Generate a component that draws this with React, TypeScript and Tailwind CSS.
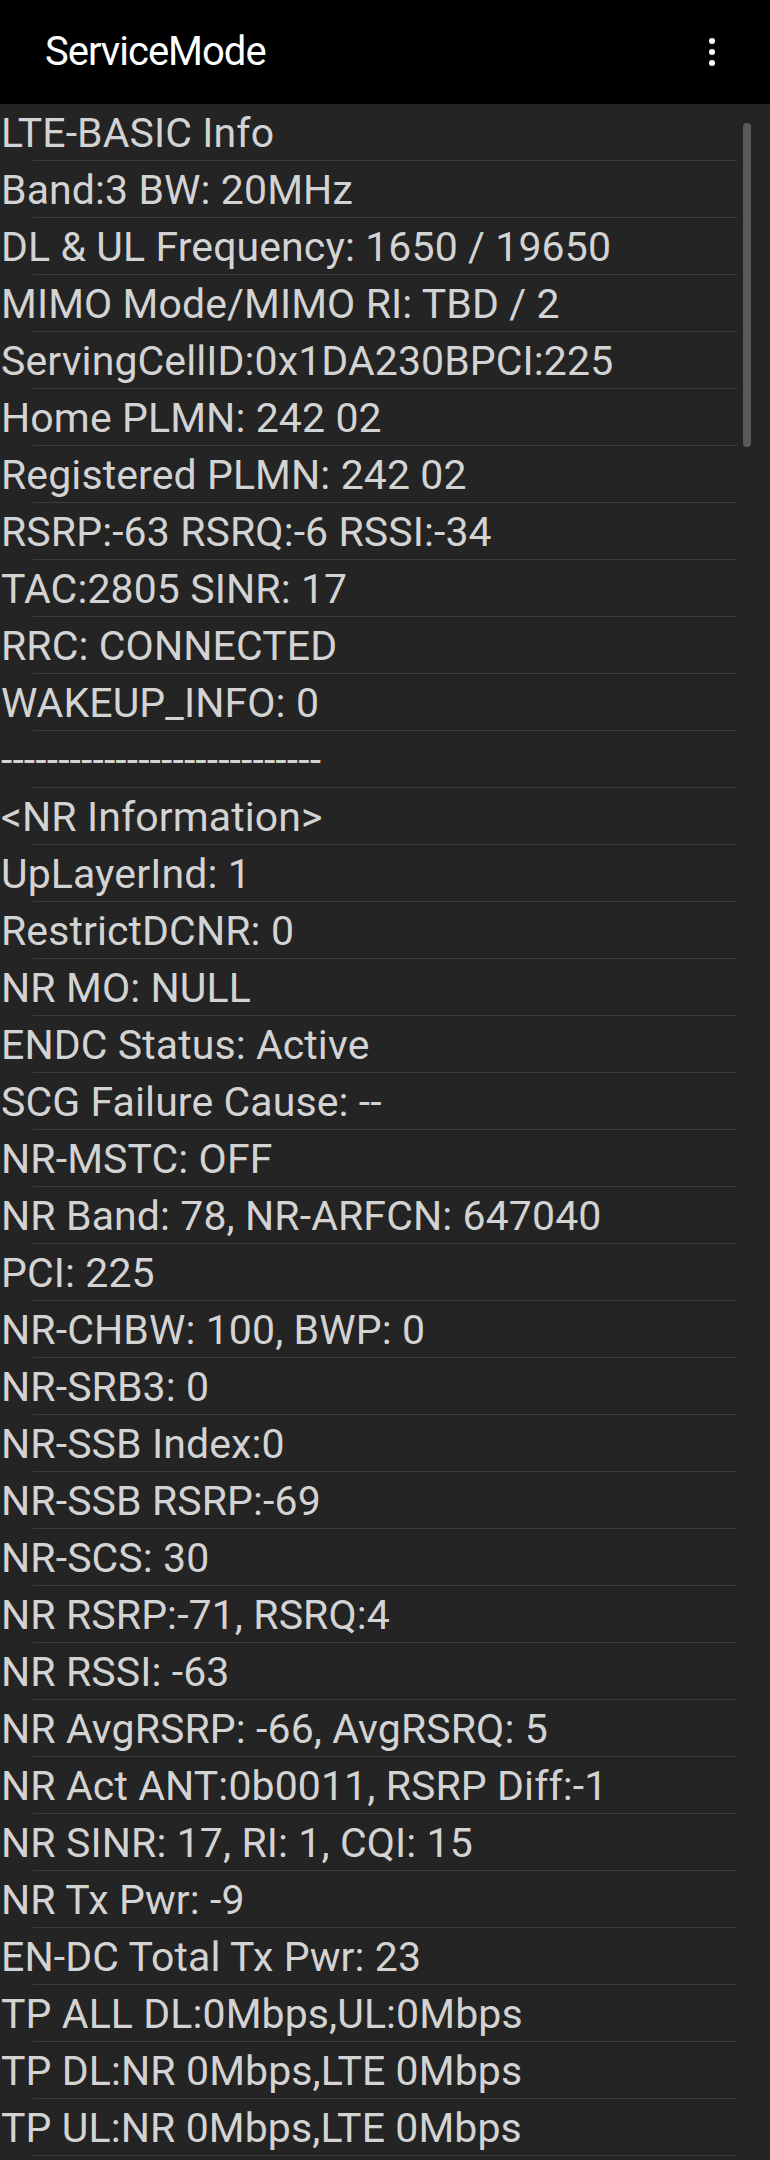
const rows = [
  "LTE-BASIC Info",
  "Band:3 BW: 20MHz",
  "DL & UL Frequency: 1650 / 19650",
  "MIMO Mode/MIMO RI: TBD / 2",
  "ServingCellID:0x1DA230BPCI:225",
  "Home PLMN: 242 02",
  "Registered PLMN: 242 02",
  "RSRP:-63 RSRQ:-6 RSSI:-34",
  "TAC:2805 SINR: 17",
  "RRC: CONNECTED",
  "WAKEUP_INFO: 0",
  "----------------------------",
  "<NR Information>",
  "UpLayerInd: 1",
  "RestrictDCNR: 0",
  "NR MO: NULL",
  "ENDC Status: Active",
  "SCG Failure Cause: --",
  "NR-MSTC: OFF",
  "NR Band: 78, NR-ARFCN: 647040",
  "PCI: 225",
  "NR-CHBW: 100, BWP: 0",
  "NR-SRB3: 0",
  "NR-SSB Index:0",
  "NR-SSB RSRP:-69",
  "NR-SCS: 30",
  "NR RSRP:-71, RSRQ:4",
  "NR RSSI: -63",
  "NR AvgRSRP: -66, AvgRSRQ: 5",
  "NR Act ANT:0b0011, RSRP Diff:-1",
  "NR SINR: 17, RI: 1, CQI: 15",
  "NR Tx Pwr: -9",
  "EN-DC Total Tx Pwr: 23",
  "TP ALL DL:0Mbps,UL:0Mbps",
  "TP DL:NR 0Mbps,LTE 0Mbps",
  "TP UL:NR 0Mbps,LTE 0Mbps",
];

const App = () => {
  return (
    <div className="flex h-[2160px] w-[770px] flex-col overflow-hidden bg-[#242424] font-['Roboto',sans-serif]">
      <div className="flex h-[104px] shrink-0 flex-row items-center justify-between bg-black pl-[45px] pr-[55px]">
        <span className="text-[40px] tracking-[-1px] text-white">ServiceMode</span>
        <div className="flex flex-col gap-[5px]">
          <span className="h-[6px] w-[6px] rounded-full bg-white" />
          <span className="h-[6px] w-[6px] rounded-full bg-white" />
          <span className="h-[6px] w-[6px] rounded-full bg-white" />
        </div>
      </div>
      <div className="relative flex flex-col">
        {rows.map((row, i) => (
          <div key={i} className="flex flex-col">
            <div className="flex h-[56px] flex-row items-center pt-[2px] pl-[1px] text-[41px] leading-none tracking-[0.1px] whitespace-nowrap text-[#d3d3d3]">
              {row}
            </div>
            <div className="ml-[33px] h-[1px] w-[704px] bg-[#3c3c3c]" />
          </div>
        ))}
        <div className="absolute top-[19px] left-[743px] h-[324px] w-[8px] rounded-full bg-[#5a5a5a]" />
      </div>
    </div>
  );
};

export default App;
